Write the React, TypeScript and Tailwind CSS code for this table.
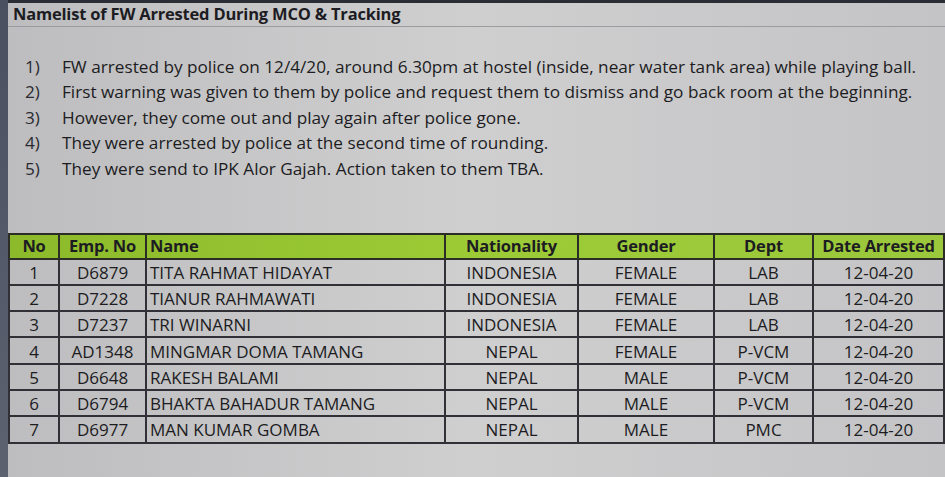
const notes = [
  "FW arrested by police on 12/4/20, around 6.30pm at hostel (inside, near water tank area) while playing ball.",
  "First warning was given to them by police and request them to dismiss and go back room at the beginning.",
  "However, they come out and play again after police gone.",
  "They were arrested by police at the second time of rounding.",
  "They were send to IPK Alor Gajah. Action taken to them TBA.",
];

const rows = [
  ["1", "D6879", "TITA RAHMAT HIDAYAT", "INDONESIA", "FEMALE", "LAB", "12-04-20"],
  ["2", "D7228", "TIANUR RAHMAWATI", "INDONESIA", "FEMALE", "LAB", "12-04-20"],
  ["3", "D7237", "TRI WINARNI", "INDONESIA", "FEMALE", "LAB", "12-04-20"],
  ["4", "AD1348", "MINGMAR DOMA TAMANG", "NEPAL", "FEMALE", "P-VCM", "12-04-20"],
  ["5", "D6648", "RAKESH BALAMI", "NEPAL", "MALE", "P-VCM", "12-04-20"],
  ["6", "D6794", "BHAKTA BAHADUR TAMANG", "NEPAL", "MALE", "P-VCM", "12-04-20"],
  ["7", "D6977", "MAN KUMAR GOMBA", "NEPAL", "MALE", "PMC", "12-04-20"],
];

const headers = ["No", "Emp. No", "Name", "Nationality", "Gender", "Dept", "Date Arrested"];

export default function App() {
  return (
    <div
      className="flex h-[477px] w-[945px] overflow-hidden bg-gradient-to-r from-[#bdbdbf] via-[#cfcfd0] to-[#c4c4c6] text-[#1c1c22]"
      style={{ fontFamily: "'Open Sans', Lato, sans-serif" }}
    >
      {/* Excel row header strip */}
      <div className="w-[8px] shrink-0 bg-gradient-to-b from-[#4a5060] to-[#5c6270]" />

      <div className="flex flex-1 flex-col">
        <div className="h-[3px] bg-[#2a2d34]" />
        <div className="flex h-[24px] items-center border-b border-[#9c9ca0] pl-[5px] text-[16.5px] font-bold tracking-[-0.2px]">
          Namelist of FW Arrested During MCO &amp; Tracking
        </div>

        <ol className="mt-[27px] flex flex-col text-[17.2px] font-medium">
          {notes.map((n, i) => (
            <li key={i} className="flex h-[25.5px] items-center">
              <span className="w-[54px] pl-[17px] text-[#2a2a30]">{i + 1})</span>
              <span>{n}</span>
            </li>
          ))}
        </ol>

        <table className="mt-[51px] w-[937px] table-fixed border-collapse text-[17px] font-medium">
          <colgroup>
            <col className="w-[50px]" />
            <col className="w-[87px]" />
            <col className="w-[299px]" />
            <col className="w-[133px]" />
            <col className="w-[136px]" />
            <col className="w-[99px]" />
            <col />
          </colgroup>
          <thead>
            <tr className="h-[25px] bg-gradient-to-r from-[#8cba2a] via-[#9ccb36] to-[#9bc83c]">
              {headers.map((h, i) => (
                <th
                  key={h}
                  className={`border-2 border-[#2b2d26] text-[16.5px] font-bold leading-none tracking-[-0.2px] ${
                    i === 2 ? "pl-[3px] text-left" : "text-center"
                  }`}
                >
                  {h}
                </th>
              ))}
            </tr>
          </thead>
          <tbody>
            {rows.map((r) => (
              <tr key={r[0]} className="h-[26.3px]">
                {r.map((c, i) => (
                  <td
                    key={i}
                    className={`border-2 border-[#303036] pt-[1px] leading-none ${
                      i === 2 ? "pl-[3px] text-left" : "text-center"
                    }`}
                  >
                    {c}
                  </td>
                ))}
              </tr>
            ))}
          </tbody>
        </table>
      </div>
    </div>
  );
}
